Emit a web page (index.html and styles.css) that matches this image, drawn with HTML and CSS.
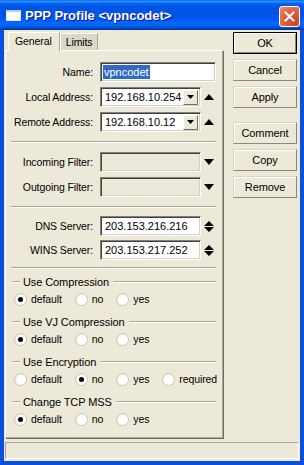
FILE: index.html
```html
<!DOCTYPE html>
<html lang="en">
<head>
    <meta charset="UTF-8">
    <title>PPP Profile &lt;vpncodet&gt;</title>
    <link rel="stylesheet" href="styles.css">
</head>
<body>

<div class="window">
    <div class="titlebar">
        <span class="app-icon"></span>
        <span class="title">PPP Profile &lt;vpncodet&gt;</span>
        <span class="close">
            <svg width="11" height="11" viewBox="0 0 11 11"><path d="M1.5 1.5 L9.5 9.5 M9.5 1.5 L1.5 9.5" stroke="#fff" stroke-width="2" stroke-linecap="square"/></svg>
        </span>
    </div>

    <div class="client">
        <div class="main">
            <div class="tabs-area">
                <div class="tabs">
                    <div class="tab active">General</div>
                    <div class="tab">Limits</div>
                </div>

                <div class="panel">
                    <!-- 1. name / addresses -->
                    <div class="row">
                        <label>Name:</label>
                        <div class="field name"><span class="sel">vpncodet</span></div>
                    </div>
                    <div class="row">
                        <label>Local Address:</label>
                        <div class="field combo">
                            <span class="val">192.168.10.254</span>
                            <span class="drop"><svg width="7" height="4" viewBox="0 0 7 4"><path d="M0 0H7L3.5 4Z"/></svg></span>
                        </div>
                        <span class="ext"><svg width="10" height="6" viewBox="0 0 10 6"><path d="M0 6H10L5 0Z"/></svg></span>
                    </div>
                    <div class="row">
                        <label>Remote Address:</label>
                        <div class="field combo">
                            <span class="val">192.168.10.12</span>
                            <span class="drop"><svg width="7" height="4" viewBox="0 0 7 4"><path d="M0 0H7L3.5 4Z"/></svg></span>
                        </div>
                        <span class="ext"><svg width="10" height="6" viewBox="0 0 10 6"><path d="M0 6H10L5 0Z"/></svg></span>
                    </div>

                    <div class="sep"></div>

                    <!-- 2. filters -->
                    <div class="row">
                        <label>Incoming Filter:</label>
                        <div class="field combo disabled"></div>
                        <span class="ext"><svg width="10" height="6" viewBox="0 0 10 6"><path d="M0 0H10L5 6Z"/></svg></span>
                    </div>
                    <div class="row">
                        <label>Outgoing Filter:</label>
                        <div class="field combo disabled"></div>
                        <span class="ext"><svg width="10" height="6" viewBox="0 0 10 6"><path d="M0 0H10L5 6Z"/></svg></span>
                    </div>

                    <div class="sep sep2"></div>

                    <!-- 3. servers -->
                    <div class="row tight">
                        <label>DNS Server:</label>
                        <div class="field combo"><span class="val">203.153.216.216</span></div>
                        <span class="ext"><svg width="10" height="11" viewBox="0 0 10 11"><path d="M0 5H10L5 0Z M0 6H10L5 11Z"/></svg></span>
                    </div>
                    <div class="row tight">
                        <label>WINS Server:</label>
                        <div class="field combo"><span class="val">203.153.217.252</span></div>
                        <span class="ext"><svg width="10" height="11" viewBox="0 0 10 11"><path d="M0 5H10L5 0Z M0 6H10L5 11Z"/></svg></span>
                    </div>

                    <div class="sep sep3"></div>

                    <!-- 4. radio groups -->
                    <div class="group">
                        <div class="group-head">Use Compression</div>
                        <div class="radios">
                            <span class="opt"><i class="radio on"></i>default</span>
                            <span class="opt"><i class="radio"></i>no</span>
                            <span class="opt"><i class="radio"></i>yes</span>
                        </div>
                    </div>
                    <div class="group">
                        <div class="group-head">Use VJ Compression</div>
                        <div class="radios">
                            <span class="opt"><i class="radio on"></i>default</span>
                            <span class="opt"><i class="radio"></i>no</span>
                            <span class="opt"><i class="radio"></i>yes</span>
                        </div>
                    </div>
                    <div class="group">
                        <div class="group-head">Use Encryption</div>
                        <div class="radios">
                            <span class="opt"><i class="radio"></i>default</span>
                            <span class="opt"><i class="radio on"></i>no</span>
                            <span class="opt"><i class="radio"></i>yes</span>
                            <span class="opt"><i class="radio"></i>required</span>
                        </div>
                    </div>
                    <div class="group">
                        <div class="group-head">Change TCP MSS</div>
                        <div class="radios">
                            <span class="opt"><i class="radio on"></i>default</span>
                            <span class="opt"><i class="radio"></i>no</span>
                            <span class="opt"><i class="radio"></i>yes</span>
                        </div>
                    </div>
                </div>
            </div>

            <div class="buttons">
                <div class="btn default">OK</div>
                <div class="btn">Cancel</div>
                <div class="btn">Apply</div>
                <div class="btn gap">Comment</div>
                <div class="btn">Copy</div>
                <div class="btn">Remove</div>
            </div>
        </div>

        <div class="statusbar"></div>
    </div>
</div>

</body>
</html>
```

FILE: styles.css
```css
/*初始化*/
body{
    margin: 0;
    font-family: "Liberation Sans", Arial, sans-serif;
    font-size: 10.5px;
    letter-spacing: -0.1px;
    color: #000;
}

/*1.窗口外框*/
.window{
    width: 304px;
    height: 465px;
    background: #0a4fdf;
    display: flex;
    flex-direction: column;
}

/*2.标题栏*/
.titlebar{
    height: 30px;
    flex: none;
    display: flex;
    align-items: center;
    padding: 0 6px;
    background: linear-gradient(to bottom, #0058ee 0%, #3593ff 4%, #288eff 6%, #127dff 8%, #036ffc 10%, #0262ee 14%, #0057e5 20%, #0054e3 24%, #0055eb 56%, #005bf5 66%, #026afe 76%, #0062ef 86%, #0052d6 92%, #0040ab 96%, #003092 100%);
}
.app-icon{
    width: 13px;
    height: 8px;
    background: #fff;
    border: 1px solid #dfe9fb;
    border-top: 2px solid #b9d1f7;
    margin: 1px 4px 0 0;
}
.title{
    flex: 1;
    color: #fff;
    font-weight: bold;
    font-size: 13px;
    letter-spacing: 0;
    text-shadow: 1px 1px #0f1089;
    margin-top: 1px;
}
.close{
    width: 19px;
    height: 19px;
    margin: 3px -2px 0 0;
    border: 1px solid #fff;
    border-radius: 3px;
    background: radial-gradient(circle at 85% 85%, #cc4627 0%, #e0603e 55%, #f08c6e 100%);
    display: flex;
    align-items: center;
    justify-content: center;
}

/*3.客户区*/
.client{
    flex: 1;
    margin: 0 4px 4px;
    background: #ece9d8;
    display: flex;
    flex-direction: column;
}
.main{
    height: 408px;
    display: flex;
}
.tabs-area{
    width: 218px;
    margin-left: 1px;
    display: flex;
    flex-direction: column;
}

/*4.标签页*/
.tabs{
    height: 20px;
    display: flex;
    align-items: flex-end;
    padding-left: 3px;
}
.tab{
    height: 16px;
    padding: 0 5px;
    line-height: 16px;
    background: #dcd8c8;
    border: 1px solid #fff;
    border-right-color: #aca899;
    border-bottom: none;
}
.tab.active{
    height: 18px;
    line-height: 17px;
    background: #ece9d8;
    position: relative;
    top: 1px;
    padding: 0 7px 0 6px;
}
.panel{
    flex: 1;
    border: 1px solid #fff;
    border-right-color: #aca899;
    border-bottom-color: #aca899;
    box-shadow: 1px 1px #716f64;
    padding-top: 11px;
}

/*5.表单行*/
.row{
    height: 20px;
    display: flex;
    align-items: center;
    margin-bottom: 5px;
}
.row.tight{
    margin-bottom: 4px;
}
.row label{
    width: 87px;
    margin-right: 7px;
    text-align: right;
}
.field{
    height: 20px;
    box-sizing: border-box;
    background: #fff;
    border: 1px solid;
    border-color: #828078 #fff #fff #828078;
    box-shadow: inset 1px 1px #404040, inset -1px -1px #d4d0c8;
    display: flex;
    align-items: center;
    font-size: 11px;
    letter-spacing: 0;
}
.field.name{
    width: 116px;
    padding-left: 2px;
}
.sel{
    background: #316ac5;
    color: #fff;
    padding: 0 1px;
    line-height: 14px;
}
.field.combo{
    width: 101px;
    padding: 0 2px 0 4px;
}
.field.disabled{
    background: #ece9d8;
}
.val{
    flex: 1;
}
.drop{
    width: 15px;
    height: 15px;
    box-sizing: border-box;
    background: #ece9d8;
    border: 1px solid;
    border-color: #fff #716f64 #716f64 #fff;
    display: flex;
    align-items: center;
    justify-content: center;
}
.ext{
    width: 15px;
    display: flex;
    justify-content: center;
}

/*6.分隔线*/
.sep{
    height: 1px;
    border-bottom: 1px solid #fff;
    background: #aca899;
    margin: 9px 6px 9px 5px;
}
.sep2{
    margin-bottom: 8px;
}
.sep3{
    margin: 7px 6px 6px 5px;
}

/*7.单选组*/
.group{
    height: 33px;
    margin-bottom: 7px;
    padding: 0 6px 0 6px;
}
.group-head{
    height: 14px;
    display: flex;
    align-items: center;
    font-size: 11px;
}
.group-head::before,
.group-head::after{
    content: "";
    height: 1px;
    background: #aca899;
    border-bottom: 1px solid #fff;
}
.group-head::before{
    width: 8px;
    margin-right: 3px;
}
.group-head::after{
    flex: 1;
    margin-left: 4px;
}
.radios{
    height: 18px;
    margin-top: 1px;
    display: flex;
    align-items: center;
    padding-left: 2px;
    font-size: 10.5px;
}
.opt{
    display: flex;
    align-items: center;
    margin-right: 13px;
}
.radio{
    width: 11px;
    height: 11px;
    border: 1px solid #c9c6b8;
    border-radius: 50%;
    background: radial-gradient(circle at 65% 65%, #fff 0%, #fff 45%, #e4e2d8 100%);
    margin-right: 4px;
    display: flex;
    align-items: center;
    justify-content: center;
}
.radio.on::after{
    content: "";
    width: 5px;
    height: 5px;
    border-radius: 50%;
    background: #000;
}

/*8.右侧按钮*/
.buttons{
    margin-left: 10px;
    padding-top: 2px;
    display: flex;
    flex-direction: column;
}
.btn{
    width: 64px;
    height: 22px;
    box-sizing: border-box;
    margin-bottom: 5px;
    border: 1px solid;
    border-color: #d8d5c6 #8c897c #8c897c #d8d5c6;
    box-shadow: inset 1px 1px #fff;
    text-align: center;
    line-height: 20px;
    font-size: 11px;
}
.btn.default{
    border-color: #000;
    box-shadow: inset 1px 1px #fff, inset -1px -1px #8c897c;
}
.btn.gap{
    margin-top: 9px;
}

/*9.状态栏*/
.statusbar{
    height: 17px;
    margin: 4px 1px 0 1px;
    box-sizing: border-box;
    border-top: 1px solid #aca899;
    border-left: 1px solid #aca899;
    border-bottom: 1px solid #fff;
    border-right: 1px solid #fff;
}
```
